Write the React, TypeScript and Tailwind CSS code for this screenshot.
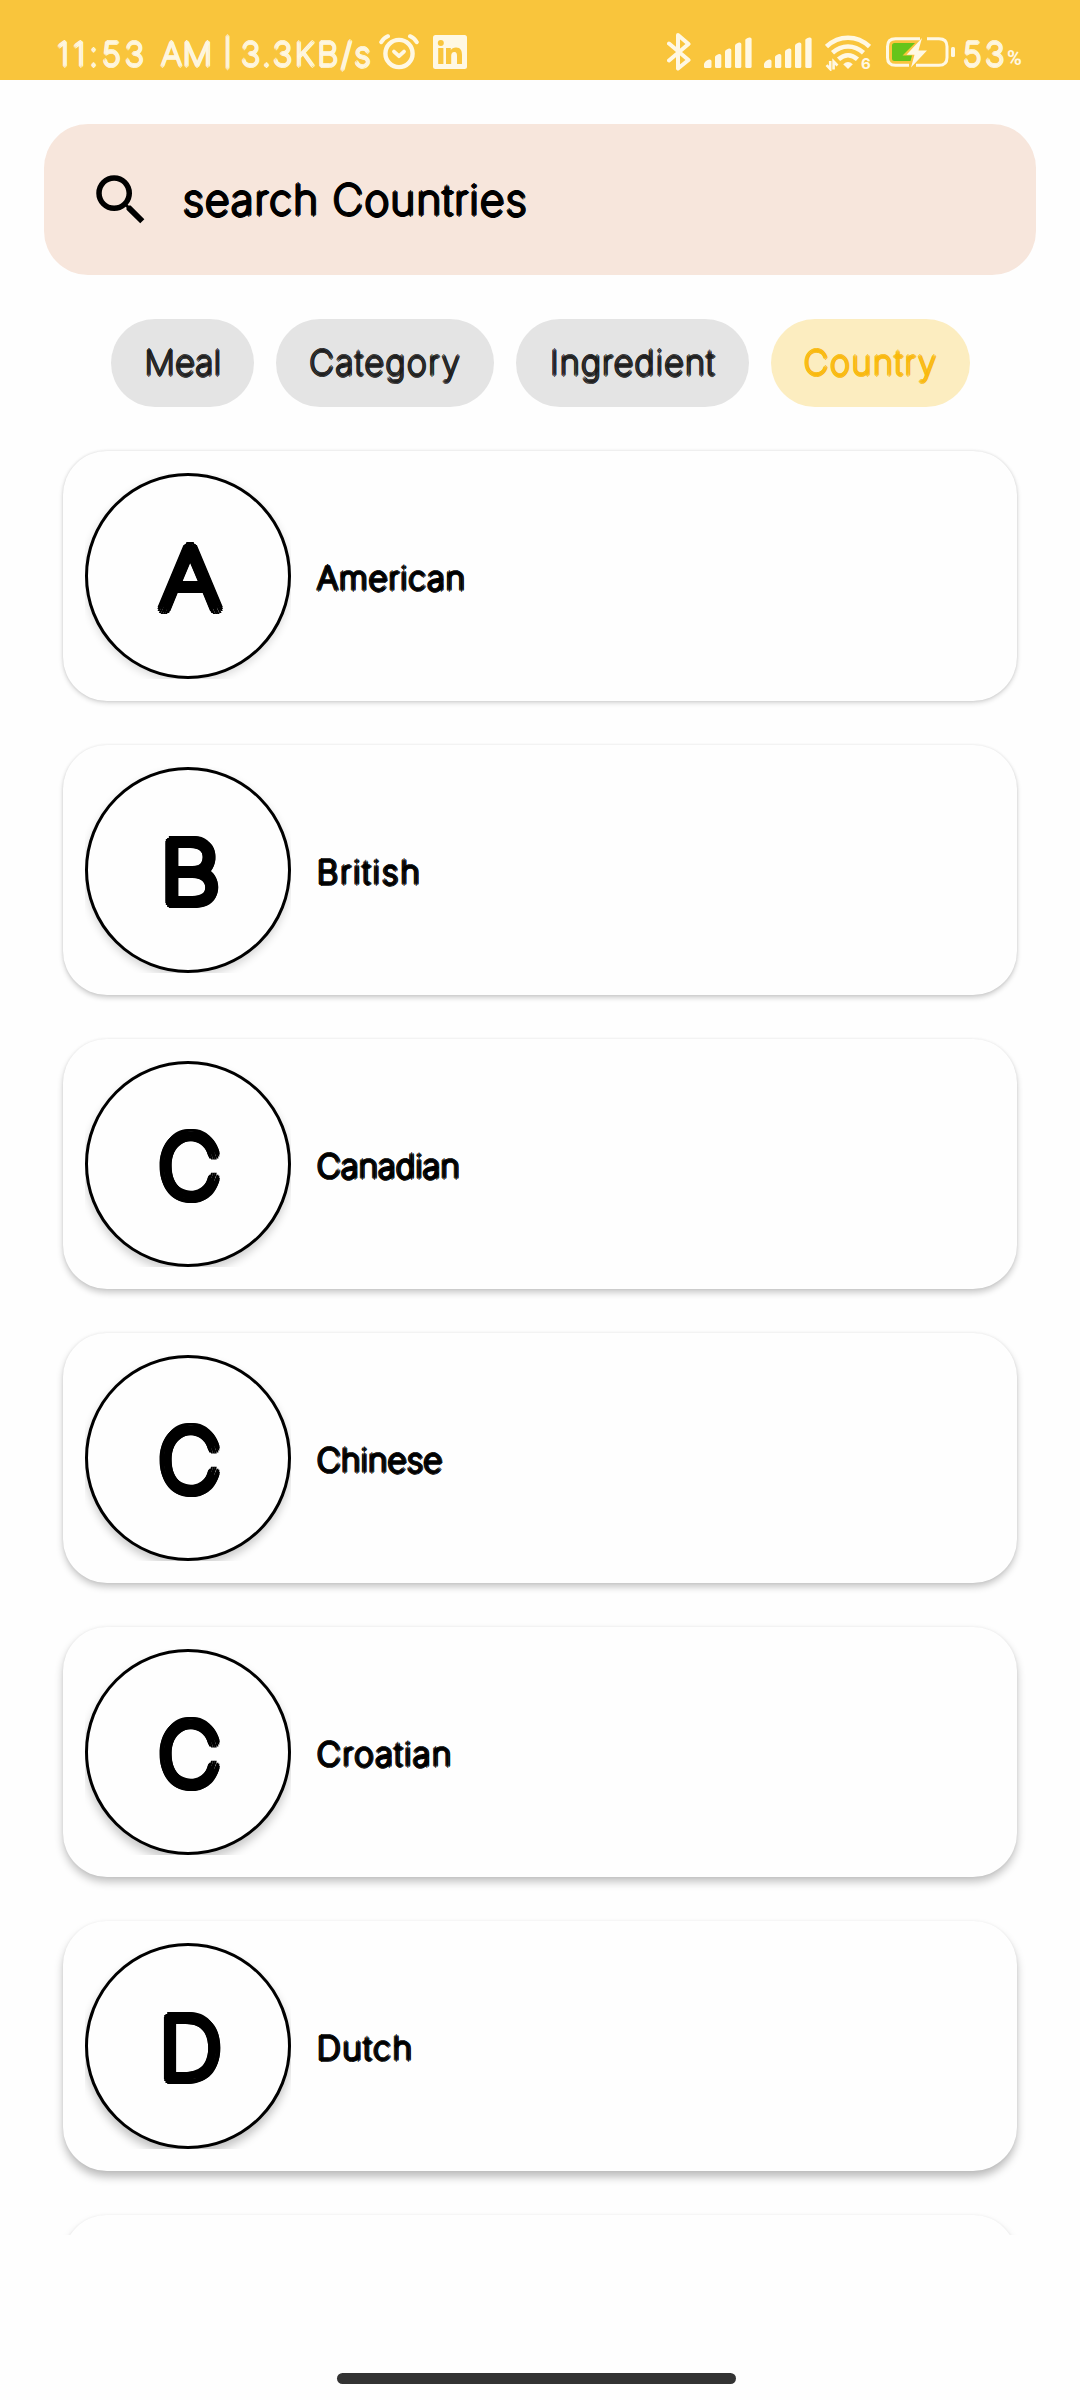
// Thin glyphs are thickened with round shadow offsets, giving soft stroke ends.
const ROUND_SM =
  "[text-shadow:1.6px_0,-1.6px_0,0_1.6px,0_-1.6px,1.1px_1.1px,-1.1px_1.1px,1.1px_-1.1px,-1.1px_-1.1px]";
const ROUND_MD =
  "[text-shadow:2px_0,-2px_0,0_2px,0_-2px,1.4px_1.4px,-1.4px_1.4px,1.4px_-1.4px,-1.4px_-1.4px,0.8px_0,-0.8px_0,0_0.8px,0_-0.8px]";
const ROUND_LG =
  "[text-shadow:5px_0,4.6px_1.9px,3.5px_3.5px,1.9px_4.6px,0_5px,-1.9px_4.6px,-3.5px_3.5px,-4.6px_1.9px,-5px_0,-4.6px_-1.9px,-3.5px_-3.5px,-1.9px_-4.6px,0_-5px,1.9px_-4.6px,3.5px_-3.5px,4.6px_-1.9px,2.5px_0,-2.5px_0,0_2.5px,0_-2.5px]";

const chips = [
  { label: "Meal", box: "w-[143px] bg-[#e4e4e4] text-[#1c1c1c]", track: "tracking-[0.4px]" },
  { label: "Category", box: "w-[218px] bg-[#e4e4e4] text-[#1c1c1c]", track: "tracking-[1.6px]" },
  { label: "Ingredient", box: "w-[233px] bg-[#e4e4e4] text-[#1c1c1c]", track: "tracking-[1.3px]" },
  { label: "Country", box: "w-[199px] bg-[#fcedc0] text-[#f9b90b]", track: "tracking-[1.7px]" },
];

const countries = [
  {
    name: "American",
    track: "tracking-[1px]",
    stretch: "scale-x-[1.12]",
    shadow: "shadow-[0_2px_5px_rgba(0,0,0,0.16),0_0_3px_rgba(0,0,0,0.10)]",
    ring: "shadow-[0_3px_8px_rgba(0,0,0,0.14)]",
  },
  {
    name: "British",
    track: "tracking-[2.2px]",
    stretch: "scale-x-[1.1]",
    shadow: "shadow-[0_3px_5px_rgba(0,0,0,0.18),0_0_3px_rgba(0,0,0,0.09)]",
    ring: "shadow-[0_4px_8px_rgba(0,0,0,0.16)]",
  },
  {
    name: "Canadian",
    track: "tracking-[0.3px]",
    stretch: "scale-x-[1.02]",
    shadow: "shadow-[0_4px_6px_rgba(0,0,0,0.20),0_0_3px_rgba(0,0,0,0.08)]",
    ring: "shadow-[0_5px_9px_rgba(0,0,0,0.18)]",
  },
  {
    name: "Chinese",
    track: "tracking-[0.3px]",
    stretch: "scale-x-[1.02]",
    shadow: "shadow-[0_4px_7px_rgba(0,0,0,0.22),0_0_3px_rgba(0,0,0,0.07)]",
    ring: "shadow-[0_5px_9px_rgba(0,0,0,0.2)]",
  },
  {
    name: "Croatian",
    track: "tracking-[1.7px]",
    stretch: "scale-x-[1.02]",
    shadow: "shadow-[0_5px_8px_rgba(0,0,0,0.24),0_0_3px_rgba(0,0,0,0.06)]",
    ring: "shadow-[0_6px_10px_rgba(0,0,0,0.21)]",
  },
  {
    name: "Dutch",
    track: "tracking-[1.9px]",
    stretch: "scale-x-[1.03]",
    shadow: "shadow-[0_6px_9px_rgba(0,0,0,0.26),0_0_3px_rgba(0,0,0,0.05)]",
    ring: "shadow-[0_6px_10px_rgba(0,0,0,0.23)]",
  },
];

function AlarmIcon() {
  return (
    <svg className="mt-[34px] h-[36px] w-[40px] shrink-0" viewBox="0 0 40 36" fill="none" stroke="currentColor" strokeLinecap="round">
      <circle cx="20" cy="19.5" r="13.6" strokeWidth="4.4" />
      <path d="M2.2 8.2Q4.6 4 9 2.2M37.8 8.2Q35.4 4 31 2.2" strokeWidth="4" />
      <path d="M15 17.6l5 4.6 5-4.6" strokeWidth="3.8" strokeLinejoin="round" />
    </svg>
  );
}

function LinkedInIcon() {
  return (
    <svg className="ml-[14px] mt-[35px] h-[34px] w-[34px] shrink-0" viewBox="0 0 34 34">
      <rect width="34" height="34" rx="2.5" fill="currentColor" />
      <g fill="#f9c53c">
        <circle cx="7.8" cy="8" r="3" />
        <rect x="5.2" y="13" width="5.2" height="16" />
        <path d="M13 13h4.8v2.2c.9-1.6 2.7-2.7 5.2-2.7 4.8 0 6 3.2 6 7.6V29h-5v-8c0-2.3-.3-4.1-2.7-4.1-2.4 0-3.1 1.7-3.1 4V29H13z" />
      </g>
    </svg>
  );
}

function BluetoothIcon() {
  return (
    <svg className="mt-[33px] h-[38px] w-[24px]" viewBox="0 0 24 38" fill="none" stroke="currentColor" strokeWidth="4" strokeLinecap="round" strokeLinejoin="round">
      <path d="M2 10.5L21.5 27 11 35.5V2L21.5 11 2 27.5" />
    </svg>
  );
}

function SignalIcon({ className }: { className: string }) {
  return (
    <svg className={`mt-[37px] h-[31px] w-[48px] ${className}`} viewBox="0 0 48 31" fill="currentColor">
      <path d="M0 29.5v-2.5q1-3.5 5-4.5 2.5-.3 2.5 1.5v5.5q0 1.5-1.5 1.5H1.5Q0 31 0 29.5z" />
      <path d="M11 20q0-1.5 4-3 2.3-.3 2.3 1.5v11q0 1.5-1.5 1.5h-3.3Q11 31 11 29.5z" />
      <path d="M21 14.5q0-1.5 4-3 2.3-.3 2.3 1.5v16.5q0 1.5-1.5 1.5h-3.3Q21 31 21 29.5z" />
      <path d="M31 8.5q0-1.5 4-3 2.3-.3 2.3 1.5v22.5q0 1.5-1.5 1.5h-3.3Q31 31 31 29.5z" />
      <path d="M41.3 3q0-1.5 4-2.500 2.3-.3 2.3 1.500v27.500q0 1.500-1.500 1.500h-3.300q-1.500 0-1.500-1.500z" />
    </svg>
  );
}

function WifiIcon() {
  return (
    <div className="relative ml-[13px] mt-[35px] h-[36px] w-[46px]">
      <svg className="size-full" viewBox="0 0 46 36" fill="none" stroke="currentColor">
        <path d="M1.5 11.5Q11 2.7 23 2.7T44.5 11.5" strokeWidth="4.6" />
        <path d="M7.5 17.8Q14.5 11.5 23 11.5T38.5 17.8" strokeWidth="4.6" />
        <path d="M13.5 24.3Q18 20.2 23 20.2T32.5 24.3" strokeWidth="4.6" />
        <path d="M18.2 29.2Q23 25 27.8 29.2L23 34z" fill="currentColor" stroke="none" />
        <path d="M5.2 26v8L1.5 30.2M8.6 34.5V26.5L12.5 30.5" strokeWidth="2.6" />
      </svg>
      <span className="absolute left-[36px] top-[21px] text-[15px] font-bold leading-none">6</span>
    </div>
  );
}

function BatteryIcon() {
  return (
    <svg className="ml-[15px] mt-[36px] h-[34px] w-[70px]" viewBox="0 0 70 34">
      <path d="M34 2.7H9.5Q1.5 2.7 1.5 10.5V21.5Q1.5 29.3 9.5 29.3H23M41 2.7H53Q61 2.7 61 10.5V21.5Q61 29.3 53 29.3H30" fill="none" stroke="currentColor" strokeWidth="3" />
      <path d="M6 9.5Q6 7 8.5 7H29L16.5 19.5H26L24.5 25H8.5Q6 25 6 22.5z" fill="#66c41a" />
      <path d="M36 2L20.5 18.8H28.5L25 31.5 41 14.6H32.5z" fill="currentColor" />
      <rect x="65" y="11" width="4" height="10" rx="1.5" fill="currentColor" />
    </svg>
  );
}

function StatusBar() {
  return (
    <header className="flex h-[80px] w-full items-start justify-between bg-[#f9c53c] pl-[57px] pr-[57px] text-[#fff8e3]">
      <div className="flex items-start">
        <div className={`mt-[38px] flex w-[322px] whitespace-nowrap text-[33px] font-thin leading-none ${ROUND_SM}`}>
          <span className="w-[104px] tracking-[4px]">11:53</span>
          <span className="w-[63px] tracking-[0.5px]">AM</span>
          <span className="w-[17px] pt-[1px] text-[27px]">|</span>
          <span className="tracking-[2.7px]">3.3KB/s</span>
        </div>
        <AlarmIcon />
        <LinkedInIcon />
      </div>
      <div className="flex items-start">
        <BluetoothIcon />
        <SignalIcon className="ml-[13px]" />
        <SignalIcon className="ml-[12px]" />
        <WifiIcon />
        <BatteryIcon />
        <span className={`ml-[7px] mt-[38px] w-[44px] text-[33px] font-thin leading-none tracking-[3.5px] ${ROUND_SM}`}>53</span>
        <span className="mt-[48px] w-[16px] font-['Roboto'] text-[20px] font-bold leading-none">%</span>
      </div>
    </header>
  );
}

function SearchBar() {
  return (
    <div className="mx-[44px] mt-[44px] flex h-[151px] items-center rounded-[44px] bg-[#f7e6dc] pl-[44px] text-black">
      <svg className="size-[66px] shrink-0" viewBox="0 0 24 24" fill="currentColor">
        <path d="M15.5 14h-.79l-.28-.27A6.471 6.471 0 0 0 16 9.5 6.5 6.5 0 1 0 9.5 16c1.61 0 3.09-.59 4.23-1.57l.27.28v.79l5 4.99L20.49 19l-4.99-5zm-6 0C7.01 14 5 11.99 5 9.5S7.01 5 9.5 5 14 7.01 14 9.5 11.99 14 9.5 14z" />
      </svg>
      <span className={`ml-[29px] whitespace-nowrap text-[42px] font-thin leading-none tracking-[1.55px] ${ROUND_MD}`}>
        search Countries
      </span>
    </div>
  );
}

export default function App() {
  return (
    <div className="flex h-[2400px] w-[1080px] flex-col overflow-hidden bg-[#fefefe] font-['Inter',sans-serif]">
      <StatusBar />
      <SearchBar />

      <nav className="ml-[111px] mt-[44px] flex gap-[22px]">
        {chips.map((chip) => (
          <button key={chip.label} className={`flex h-[88px] items-center justify-center rounded-full pl-[1px] ${chip.box}`}>
            <span className={`whitespace-nowrap text-[34px] font-thin leading-none ${chip.track} ${ROUND_SM}`}>{chip.label}</span>
          </button>
        ))}
      </nav>

      <main className="flex h-[1828px] flex-col gap-[44px] overflow-hidden px-[63px] pt-[44px] text-black">
        {countries.map((country) => (
          <article key={country.name} className={`flex h-[250px] shrink-0 items-center rounded-[44px] bg-[#fefefe] pl-[22px] ${country.shadow}`}>
            <div className="size-[206px] shrink-0 overflow-hidden">
              <div className={`flex size-full items-center justify-center rounded-full border-[3px] border-black bg-[#fefefe] ${country.ring}`}>
                <span className={`ml-[4px] mt-[5px] text-[85px] font-thin leading-none ${country.stretch} ${ROUND_LG}`}>{country.name[0]}</span>
              </div>
            </div>
            <span className={`ml-[26px] mt-[4px] whitespace-nowrap text-[33px] font-thin leading-none ${country.track} ${ROUND_MD}`}>
              {country.name}
            </span>
          </article>
        ))}
        <article className="h-[250px] shrink-0 rounded-[44px] bg-[#fefefe] shadow-[0_6px_9px_rgba(0,0,0,0.26),0_0_3px_rgba(0,0,0,0.05)]" />
      </main>

      <footer className="mt-[138px] flex justify-center pr-[7px]">
        <div className="h-[11px] w-[399px] rounded-full bg-[#333333]" />
      </footer>
    </div>
  );
}
